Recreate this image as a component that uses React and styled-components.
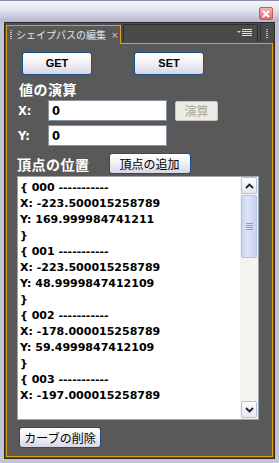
import React from 'react'
import styled, {createGlobalStyle} from 'styled-components'

const GlobalStyle = createGlobalStyle`
  html, body {
    margin: 0;
    padding: 0;
    background: #c6c6da;
  }
  * {
    box-sizing: border-box;
  }
`

const Window = styled.div`
  width: 279px;
  height: 463px;
  display: flex;
  flex-direction: column;
  background: #c4c4d8;
  border-top: 1px solid #8c8cac;
  font-family: "DejaVu Sans", "Noto Sans CJK JP", sans-serif;
`
const TitleBar = styled.div`
  height: 21px;
  flex: none;
  display: flex;
  justify-content: flex-end;
  align-items: flex-start;
  padding: 6px 6px 0 0;
  background: linear-gradient(#f4f4fa 0%, #e6e6f0 40%, #b4b4cc 100%);
`
const CloseButton = styled.div`
  width: 14px;
  height: 13px;
  border: 1px solid #c85858;
  border-radius: 2px;
  background: linear-gradient(#f6b4b4, #e06a6a);
  display: flex;
  align-items: center;
  justify-content: center;
`
const Panel = styled.div`
  flex: 1;
  margin: 0 4px 5px 4px;
  display: flex;
  flex-direction: column;
  background: #4c4c4c;
  border: 1px solid #2c2c2c;
  padding: 0 1px 1px 1px;
`
const TabBar = styled.div`
  height: 20px;
  flex: none;
  display: flex;
  align-items: flex-end;
  gap: 2px;
  padding-top: 1px;
`
const Tab = styled.div`
  position: relative;
  z-index: 1;
  width: 115px;
  height: 19px;
  margin-bottom: -1px;
  display: flex;
  align-items: center;
  gap: 4px;
  padding: 0 0 1px 3px;
  background: #595959;
  border: 1px solid #e0a010;
  border-bottom: none;
  color: #e4e4e4;
  font-family: "Noto Sans CJK JP", sans-serif;
  font-size: 10px;
  white-space: nowrap;
`
const Grip = styled.div`
  width: 2px;
  height: 9px;
  flex: none;
  background: repeating-linear-gradient(#bdbdbd 0 1px, transparent 1px 2px);
`
const TabClose = styled.span`
  color: #c8c8c8;
  font-family: "DejaVu Sans", sans-serif;
  font-size: 9px;
  margin-left: 1px;
`
const TabRest = styled.div`
  flex: 1;
  height: 18px;
  margin-bottom: 1px;
  display: flex;
  align-items: center;
  justify-content: flex-end;
  padding-right: 5px;
  background: #4a4a4a;
  border: 1px solid #2e2e2e;
  border-bottom: none;
`
const GripBar = styled.div`
  width: 13px;
  height: 18px;
  margin-bottom: 1px;
  display: flex;
  align-items: center;
  justify-content: center;
  background: #4a4a4a;
  border-left: 1px solid #2e2e2e;
`
const Content = styled.div`
  flex: 1;
  display: flex;
  flex-direction: column;
  background: #595959;
  border: 1px solid #e0a010;
  padding: 8px 13px 8px 10px;
`
const TopButtons = styled.div`
  display: flex;
  gap: 42px;
  padding-left: 5px;
`
const XPButton = styled.button`
  height: ${p => p.$h || 21}px;
  width: ${p => p.$w}px;
  padding: 0;
  border: 1px solid #1e4f85;
  border-radius: 3px;
  background: linear-gradient(#ffffff 0%, #f2f2f6 45%, #d6d6e6 100%);
  color: #000;
  font-family: ${p => p.$bold ? '"Liberation Sans", Arial, sans-serif' : '"Noto Sans CJK JP", sans-serif'};
  font-weight: ${p => p.$bold ? 700 : 400};
  font-size: ${p => p.$size || 12}px;
  line-height: 1;
  display: flex;
  align-items: center;
  justify-content: center;
`
const DisabledButton = styled.button`
  width: 43px;
  height: 20px;
  padding: 0;
  margin-left: 8px;
  border: 1px solid #c6c5b8;
  border-radius: 2px;
  background: #ecebe5;
  color: #aca899;
  font-family: "Noto Sans CJK JP", sans-serif;
  font-size: 12px;
  line-height: 1;
`
const SectionLabel = styled.div`
  color: #ffffff;
  font-family: "Noto Sans CJK JP", sans-serif;
  font-weight: 700;
  font-size: 14px;
  letter-spacing: 0.5px;
  line-height: 16px;
`
const CalcTitle = styled(SectionLabel)`
  margin: 6px 0 3px 2px;
`
const FieldRow = styled.div`
  display: flex;
  align-items: center;
  margin-top: ${p => p.$top || 0}px;
`
const FieldLabel = styled.div`
  width: 31px;
  padding-left: 1px;
  color: #ffffff;
  font-family: "DejaVu Sans", sans-serif;
  font-weight: 700;
  font-size: 11.5px;
`
const Input = styled.div`
  width: 119px;
  height: 21px;
  display: flex;
  align-items: center;
  padding-left: 3px;
  background: #ffffff;
  border: 1px solid #8493a1;
  color: #000;
  font-weight: 700;
  font-size: 11.5px;
`
const VertexHeader = styled.div`
  display: flex;
  align-items: center;
  gap: 19px;
  margin-top: 7px;
  margin-bottom: 2px;
`
const ListBox = styled.div`
  height: 244px;
  width: 242px;
  flex: none;
  display: flex;
  background: #ffffff;
  border: 1px solid #9ca3ab;
`
const ListText = styled.div`
  flex: 1;
  overflow: hidden;
  padding: 3px 0 0 2px;
  color: #000;
  font-family: "DejaVu Sans", sans-serif;
  font-weight: 700;
  font-size: 11px;
  line-height: 16px;
  white-space: pre;
`
const ScrollBar = styled.div`
  width: 18px;
  display: flex;
  flex-direction: column;
  padding: 0 1px 1px 1px;
  background: #f3f3ef;
`
const ScrollBtn = styled.div`
  height: 17px;
  flex: none;
  display: flex;
  align-items: center;
  justify-content: center;
  border: 1px solid #b7c1d9;
  border-radius: 2px;
  background: linear-gradient(#fdfdff, #e4e8f4);
`
const Track = styled.div`
  flex: 1;
  padding-top: 1px;
`
const Thumb = styled.div`
  height: 63px;
  display: flex;
  align-items: center;
  justify-content: center;
  border: 1px solid #b4c2e8;
  border-radius: 2px;
  background: linear-gradient(90deg, #c9d4f6, #dde4fb 40%, #c6d1f4);
`
const ThumbGrip = styled.div`
  width: 7px;
  height: 7px;
  background: repeating-linear-gradient(#8c9bc4 0 1px, transparent 1px 2px);
`
const BottomRow = styled.div`
  margin-top: 7px;
  padding-left: 2px;
`

const lines = [
  '{ 000 -----------',
  'X: -223.500015258789',
  'Y: 169.999984741211',
  '}',
  '{ 001 -----------',
  'X: -223.500015258789',
  'Y: 48.9999847412109',
  '}',
  '{ 002 -----------',
  'X: -178.000015258789',
  'Y: 59.4999847412109',
  '}',
  '{ 003 -----------',
  'X: -197.000015258789'
]

const Chevron = ({down}) => (
  <svg width="9" height="6" viewBox="0 0 9 6">
    <path d={down ? 'M1 1 L4.5 4.5 L8 1' : 'M1 5 L4.5 1.5 L8 5'} fill="none" stroke="#222" strokeWidth="1.8" />
  </svg>
)

const MenuIcon = () => (
  <svg width="15" height="9" viewBox="0 0 15 9">
    <path d="M0 2 L4 2 L2 4 Z" fill="#e0e0e0" />
    <rect x="5" y="0" width="10" height="1" fill="#e0e0e0" />
    <rect x="5" y="2" width="10" height="1" fill="#e0e0e0" />
    <rect x="5" y="4" width="10" height="1" fill="#e0e0e0" />
    <rect x="5" y="6" width="10" height="1" fill="#e0e0e0" />
  </svg>
)

export default function App() {
  return (
    <>
      <GlobalStyle />
      <Window>
        <TitleBar>
          <CloseButton>
            <svg width="8" height="8" viewBox="0 0 8 8">
              <path d="M1 1 L7 7 M7 1 L1 7" stroke="#fff" strokeWidth="2" />
            </svg>
          </CloseButton>
        </TitleBar>
        <Panel>
          <TabBar>
            <Tab>
              <Grip />
              <span>シェイプパスの編集</span>
              <TabClose>×</TabClose>
            </Tab>
            <TabRest>
              <MenuIcon />
            </TabRest>
            <GripBar>
              <Grip />
            </GripBar>
          </TabBar>
          <Content>
            <TopButtons>
              <XPButton $w={70} $h={23} $bold $size={11}>GET</XPButton>
              <XPButton $w={70} $h={23} $bold $size={11}>SET</XPButton>
            </TopButtons>
            <CalcTitle>値の演算</CalcTitle>
            <FieldRow>
              <FieldLabel>X:</FieldLabel>
              <Input>0</Input>
              <DisabledButton disabled>演算</DisabledButton>
            </FieldRow>
            <FieldRow $top={4}>
              <FieldLabel>Y:</FieldLabel>
              <Input>0</Input>
            </FieldRow>
            <VertexHeader>
              <SectionLabel>頂点の位置</SectionLabel>
              <XPButton $w={82}>頂点の追加</XPButton>
            </VertexHeader>
            <ListBox>
              <ListText>{lines.join('\n')}</ListText>
              <ScrollBar>
                <ScrollBtn><Chevron /></ScrollBtn>
                <Track>
                  <Thumb><ThumbGrip /></Thumb>
                </Track>
                <ScrollBtn><Chevron down /></ScrollBtn>
              </ScrollBar>
            </ListBox>
            <BottomRow>
              <XPButton $w={82}>カーブの削除</XPButton>
            </BottomRow>
          </Content>
        </Panel>
      </Window>
    </>
  )
}
